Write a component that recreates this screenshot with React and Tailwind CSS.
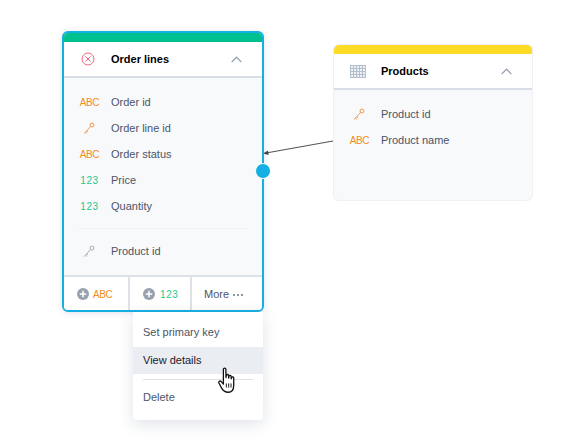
const KeyIcon = ({ color = "#f2994a" }) => (
  <svg className="-ml-[2px]" width="12" height="13" viewBox="0 0 12 13" fill="none" stroke={color} strokeWidth="1">
    <circle cx="9" cy="3" r="2" />
    <path d="M7.6 4.4 L1.2 11.6 M2.4 10.2 L3.8 11.4 M3.8 8.8 L5 10" />
  </svg>
)

const TableIcon = () => (
  <svg width="16" height="13" viewBox="0 0 16 13" fill="none" stroke="#b4bfcc" strokeWidth="1">
    <rect x="0.5" y="0.5" width="15" height="12" fill="#eef1f5" />
    <path d="M0.5 3.5H15.5M0.5 6.5H15.5M0.5 9.5H15.5M3.5 0.5V12.5M6.5 0.5V12.5M9.5 0.5V12.5M12.5 0.5V12.5" />
  </svg>
)

const Chevron = () => (
  <svg width="11" height="7" viewBox="0 0 11 7" fill="none" stroke="#9aa5b1" strokeWidth="1.3">
    <path d="M0.7 6 L5.5 1.2 L10.3 6" />
  </svg>
)

const ErrorIcon = () => (
  <svg width="14" height="14" viewBox="0 0 14 14" fill="none" stroke="#f0647c" strokeWidth="1">
    <circle cx="7" cy="7" r="6" />
    <path d="M4.4 4.4 L9.6 9.6 M9.6 4.4 L4.4 9.6" />
  </svg>
)

const PlusIcon = () => (
  <svg width="12" height="12" viewBox="0 0 12 12">
    <circle cx="6" cy="6" r="6" fill="#98a2ae" />
    <path d="M6 2.8V9.2M2.8 6H9.2" stroke="#fff" strokeWidth="1.5" />
  </svg>
)

const Hand = () => (
  <svg width="19" height="27" viewBox="0 0 16 23" fill="#fff" stroke="#111" strokeWidth="1.1" strokeLinejoin="round">
    <path d="M4.5 2 C4.5 0.6 6.6 0.6 6.6 2 L6.7 9 L7 7.2 C7.2 6 8.9 6.2 8.9 7.4 L9 9.4 L9.3 7.8 C9.5 6.8 11.1 7 11.1 8.2 L11.2 10 L11.5 9 C11.8 8 13.3 8.3 13.3 9.4 L13.3 15.5 C13.3 19 12 21.5 8.6 21.5 C5.5 21.5 4.3 20.4 3 18 L0.7 13.6 C0.1 12.4 1.7 11.3 2.7 12.5 L4.5 14.6 Z" />
    <path d="M7 14V17.5M9 14V17.5M11 14V17.5" strokeWidth="0.8" />
  </svg>
)

const Abc = () => <span className="text-[10px] tracking-[-0.4px] text-[#f28c1a]">ABC</span>
const Num = () => <span className="text-[10px] tracking-[0.6px] text-[#1fc791]">123</span>

const Row = ({ icon, children }) => (
  <div className="flex h-[26px] items-center">
    <div className="flex w-[47px] justify-center pl-[4px]">{icon}</div>
    <span className="text-[11px] text-[#4a5568]">{children}</span>
  </div>
)

const Header = ({ icon, title }) => (
  <div className="flex h-[36px] items-center border-b-2 border-[#d9dee6] bg-white">
    <div className="flex w-[47px] justify-center pl-[1px]">{icon}</div>
    <span className="flex-1 text-[11px] font-bold text-black">{title}</span>
    <div className="mr-[20px] flex">
      <Chevron />
    </div>
  </div>
)

export default function App() {
  return (
    <div className="relative h-[448px] w-[578px] overflow-hidden bg-white font-['Liberation_Sans',Arial,sans-serif]">
      {/* connector */}
      <svg className="absolute left-[260px] top-[135px]" width="80" height="25" viewBox="0 0 80 25" fill="none">
        <path d="M73 6 L6 18" stroke="#555" strokeWidth="1.1" />
        <path d="M3 18.5 L8 15.5 L8.6 20 Z" fill="#444" />
      </svg>

      {/* Order lines */}
      <div className="absolute left-[62px] top-[31px] flex h-[281px] w-[202px] flex-col overflow-hidden rounded-[6px] border-2 border-[#14afe3] bg-[#f8f9fb] shadow-[0_1px_6px_rgba(90,110,140,0.2)]">
        <div className="h-[9px] bg-[#00c08f]" />
        <Header icon={<ErrorIcon />} title="Order lines" />
        <div className="flex flex-1 flex-col pt-[11px]">
          <Row icon={<Abc />}>Order id</Row>
          <Row icon={<KeyIcon />}>Order line id</Row>
          <Row icon={<Abc />}>Order status</Row>
          <Row icon={<Num />}>Price</Row>
          <Row icon={<Num />}>Quantity</Row>
          <div className="mx-[14px] my-[9px] h-px bg-[#f0f1f4]" />
          <Row icon={<KeyIcon color="#a4adb8" />}>Product id</Row>
        </div>
        <div className="flex h-[35px] border-t-2 border-[#dde1e8] bg-white">
          <div className="flex w-[66px] items-center gap-[4px] border-r-2 border-[#dde1e8] pl-[13px] pt-[1px]">
            <PlusIcon />
            <Abc />
          </div>
          <div className="flex w-[62px] items-center gap-[5px] border-r-2 border-[#dde1e8] pl-[13px] pt-[1px]">
            <PlusIcon />
            <Num />
          </div>
          <div className="flex flex-1 items-center gap-[4px] pl-3 pt-[2px] text-[11px] text-[#4a5568]">
            More
            <span className="flex gap-[2px]">
              <i className="h-[2px] w-[2px] bg-[#8d97a3]" />
              <i className="h-[2px] w-[2px] bg-[#8d97a3]" />
              <i className="h-[2px] w-[2px] bg-[#8d97a3]" />
            </span>
          </div>
        </div>
      </div>

      {/* port */}
      <div className="absolute left-[255px] top-[163px] h-4 w-4 rounded-full border border-white bg-[#14afe3]" />

      {/* Products */}
      <div className="absolute left-[333px] top-[44px] flex h-[157px] w-[200px] flex-col overflow-hidden rounded-[6px] border border-[#eef0f4] bg-[#f8f9fb]">
        <div className="h-[9px] bg-[#fddb26]" />
        <Header icon={<TableIcon />} title="Products" />
        <div className="pt-[11px]">
          <Row icon={<KeyIcon />}>Product id</Row>
          <Row icon={<Abc />}>Product name</Row>
        </div>
      </div>

      {/* menu */}
      <div className="absolute left-[133px] top-[312px] h-[108px] w-[130px] rounded-b-[4px] bg-white shadow-[0_4px_16px_rgba(90,110,140,0.2)]">
        <div className="flex h-[35px] items-center pl-[10px] pt-[6px] text-[11px] text-[#4a5568]">Set primary key</div>
        <div className="flex h-[27px] items-center bg-[#eaedf1] pl-[10px] text-[11px] text-[#1a202c]">View details</div>
        <div className="mx-[10px] mt-[5px] h-px bg-[#dfe3e9]" />
        <div className="flex h-[35px] items-center pl-[10px] text-[11px] text-[#4a5568]">Delete</div>
      </div>

      <div className="absolute left-[218px] top-[367px]">
        <Hand />
      </div>
    </div>
  )
}
